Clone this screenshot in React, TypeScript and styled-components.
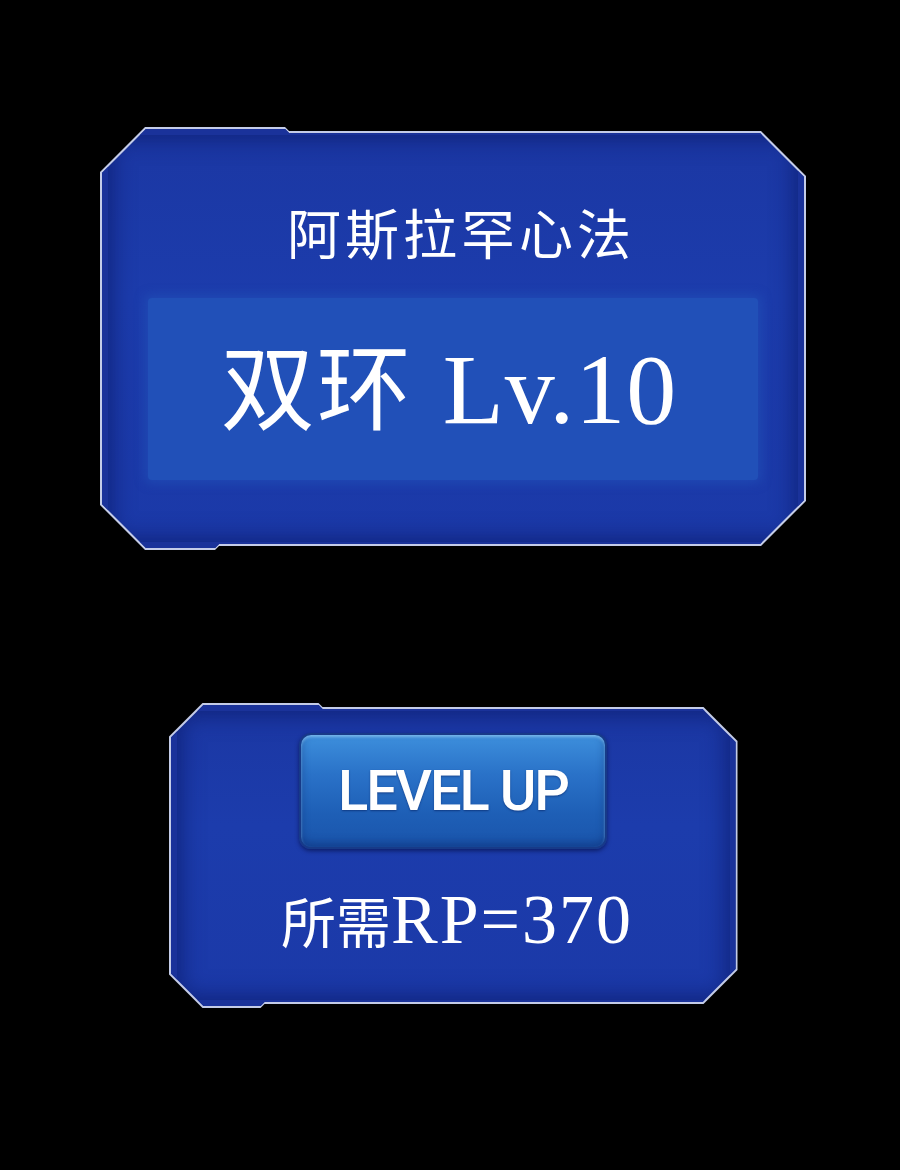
import styled, { createGlobalStyle } from "styled-components";

const GlobalStyle = createGlobalStyle`
  html, body {
    margin: 0;
    padding: 0;
    background: #000;
  }
  body {
    font-family: "Liberation Serif", "Noto Sans CJK SC", serif;
    color: #fff;
  }
`;

type Shape = {
  $c: number;
  $top: number;
  $bottom: number;
};

// chamfered outline with a small step on the top and bottom edges
const outline = (c: number, top: number, bottom: number, step = 4) => `polygon(
  ${c}px 0, ${top}px 0, ${top + step}px ${step}px,
  calc(100% - ${c}px) ${step}px, 100% ${c + step}px,
  100% calc(100% - ${c + step}px), calc(100% - ${c}px) calc(100% - ${step}px),
  ${bottom + step}px calc(100% - ${step}px), ${bottom}px 100%,
  ${c}px 100%, 0 calc(100% - ${c}px), 0 ${c}px
)`;

const Page = styled.div`
  min-height: 1170px;
  display: flex;
  flex-direction: column;
  align-items: center;
  padding: 127px 0 0 6px;
  box-sizing: border-box;
  gap: 153px;
`;

const Frame = styled.div<Shape & { $w: number; $h: number }>`
  width: ${(p) => p.$w}px;
  height: ${(p) => p.$h}px;
  padding: 2px;
  box-sizing: border-box;
  display: flex;
  background: #c4cce8;
  clip-path: ${(p) => outline(p.$c, p.$top, p.$bottom)};
`;

const Body = styled.div<Shape>`
  flex: 1;
  display: flex;
  flex-direction: column;
  align-items: center;
  background: linear-gradient(180deg, #1b37a3 0%, #1c3cac 40%, #1b39a8 100%);
  box-shadow: inset 0 0 0 6px #1a329a, inset 0 0 22px 10px rgba(12, 28, 110, 0.75);
  clip-path: ${(p) => outline(p.$c - 1, p.$top - 2, p.$bottom - 2)};
`;

const Title = styled.div`
  margin-top: 73px;
  margin-left: 16px;
  font-size: 54px;
  line-height: 60px;
  letter-spacing: 4px;
  font-family: "Noto Sans CJK SC", serif;
  font-weight: 400;
`;

const LevelBox = styled.div`
  margin-top: 36px;
  width: 610px;
  height: 182px;
  display: flex;
  align-items: center;
  justify-content: center;
  background: #2150b8;
  box-shadow: 0 0 10px 4px rgba(33, 80, 184, 0.6);
  border-radius: 4px;
`;

const LevelText = styled.div`
  display: flex;
  align-items: baseline;
  gap: 30px;
  margin: 0 8px 6px 0;
  line-height: 110px;
`;

const Cjk = styled.span<{ $size: number; $gap?: number }>`
  font-family: "Noto Sans CJK SC", sans-serif;
  font-size: ${(p) => p.$size}px;
  letter-spacing: ${(p) => p.$gap ?? 0}px;
`;

const Latin = styled.span<{ $size: number; $gap?: number }>`
  font-family: "Liberation Serif", serif;
  font-size: ${(p) => p.$size}px;
  letter-spacing: ${(p) => p.$gap ?? 0}px;
`;

const Button = styled.div`
  margin-top: 28px;
  width: 308px;
  height: 116px;
  box-sizing: border-box;
  border-radius: 12px;
  border: 2px solid #173a88;
  background: linear-gradient(180deg, #3d8fdc 0%, #2a72c8 35%, #1e5fb6 70%, #1a55ac 100%);
  box-shadow: inset 0 2px 3px rgba(170, 220, 255, 0.55), inset 0 -4px 8px rgba(10, 40, 110, 0.5),
    0 2px 4px rgba(0, 10, 60, 0.6);
  display: flex;
  align-items: center;
  justify-content: center;
  font-family: Roboto, "Liberation Sans", sans-serif;
  font-weight: 500;
  font-size: 56px;
  letter-spacing: -2px;
  text-shadow: 0 1px 2px rgba(0, 20, 80, 0.5);
`;

const Cost = styled.div`
  display: flex;
  align-items: baseline;
  margin-top: 35px;
  margin-left: 8px;
  line-height: 70px;
`;

export default function App() {
  return (
    <>
      <GlobalStyle />
      <Page>
        <Frame $w={706} $h={423} $c={45} $top={185} $bottom={115}>
          <Body $c={45} $top={185} $bottom={115}>
            <Title>阿斯拉罕心法</Title>
            <LevelBox>
              <LevelText>
                <Cjk $size={94} $gap={2}>双环</Cjk>
                <Latin $size={100} $gap={1}>Lv.10</Latin>
              </LevelText>
            </LevelBox>
          </Body>
        </Frame>
        <Frame $w={569} $h={305} $c={34} $top={150} $bottom={92}>
          <Body $c={34} $top={150} $bottom={92}>
            <Button>LEVEL UP</Button>
            <Cost>
              <Cjk $size={55}>所需</Cjk>
              <Latin $size={70} $gap={2}>RP=370</Latin>
            </Cost>
          </Body>
        </Frame>
      </Page>
    </>
  );
}
